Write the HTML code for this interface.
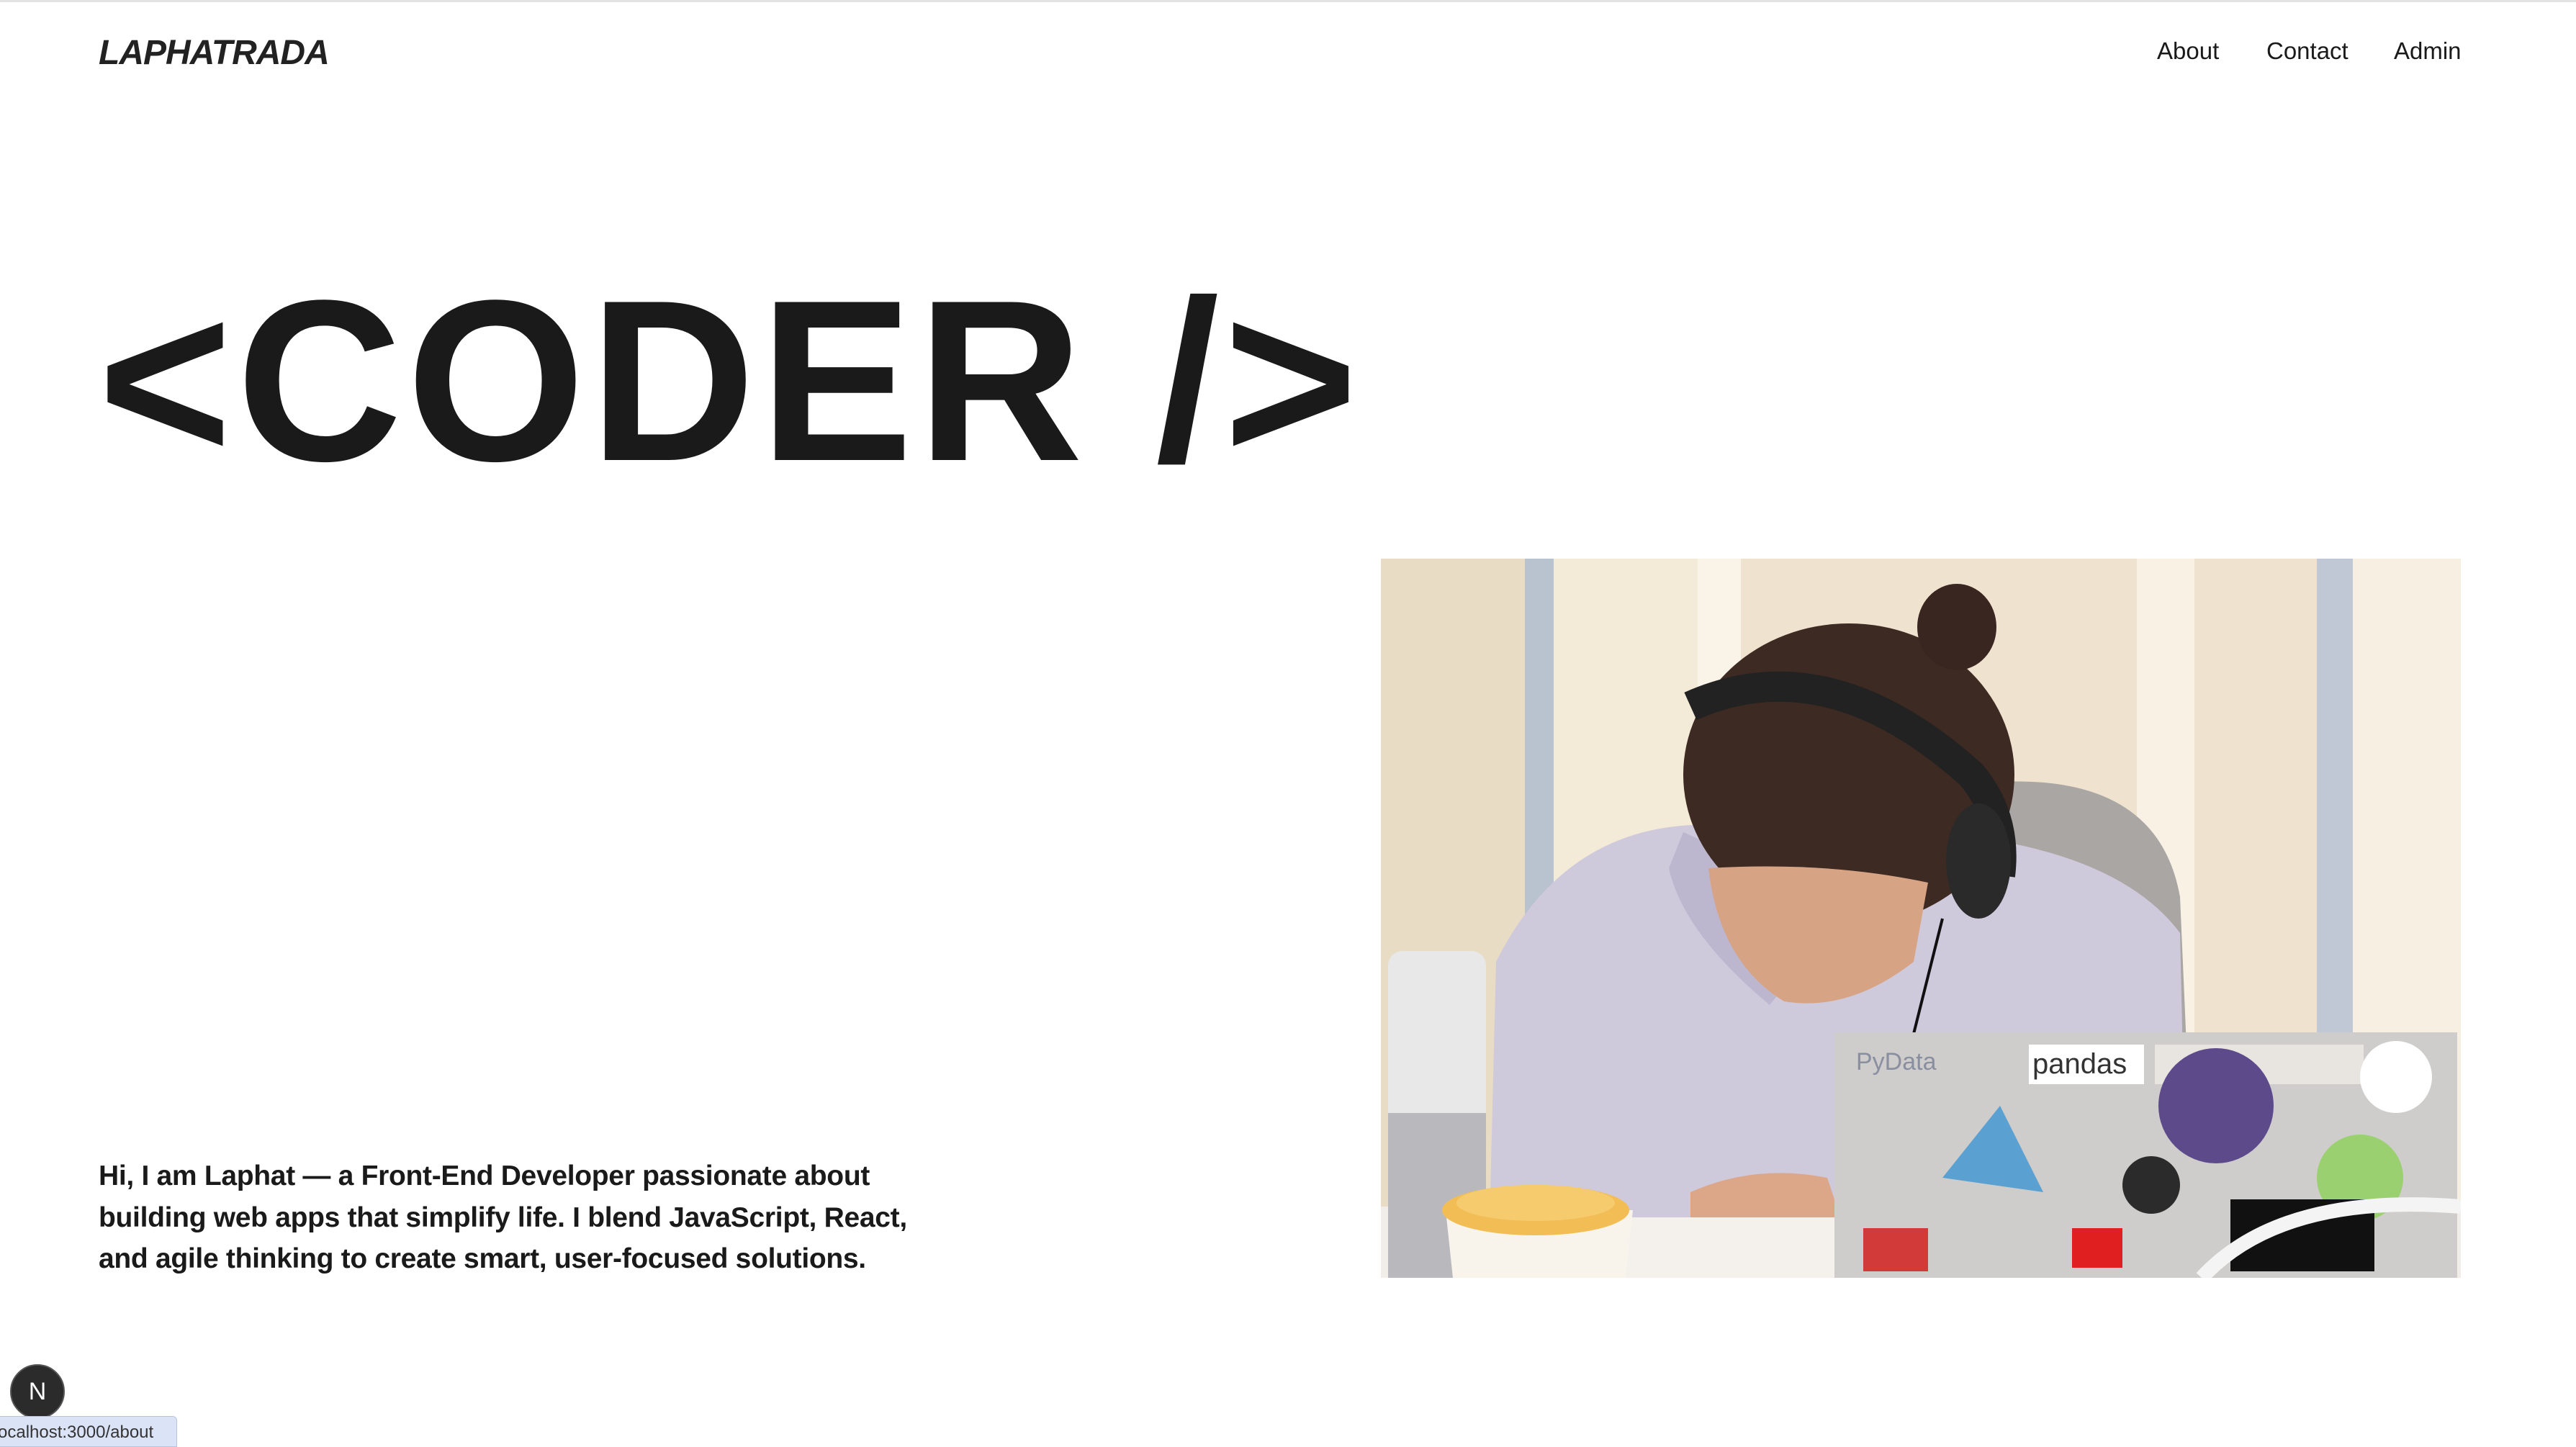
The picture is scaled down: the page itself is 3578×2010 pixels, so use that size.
<!DOCTYPE html>
<html><head><meta charset="utf-8"><style>
html,body{margin:0;padding:0;background:#fff;}
body{width:3578px;height:2010px;position:relative;overflow:hidden;font-family:"Liberation Sans",Arial,sans-serif;color:#1a1a1a;}
.topline{position:absolute;left:0;top:0;width:100%;height:3px;background:#e2e2e2;}
.logo{position:absolute;left:137px;top:46px;font-size:48px;font-weight:bold;font-style:italic;letter-spacing:-1px;color:#222;}
.nav{position:absolute;top:52px;font-size:33px;color:#1a1a1a;}
.coder{position:absolute;left:136px;top:369px;font-size:319px;font-weight:bold;letter-spacing:6px;line-height:1;color:#1a1a1a;white-space:nowrap;}
.para{position:absolute;left:137px;top:1605px;width:1130px;font-size:39px;font-weight:bold;line-height:57.5px;color:#1a1a1a;letter-spacing:-0.3px;}
.photo{position:absolute;left:1918px;top:776px;width:1500px;height:999px;}
.badge{position:absolute;left:14px;top:1895px;width:76px;height:76px;border-radius:50%;background:#2b2b2b;border:2px solid #555;box-sizing:border-box;color:#fff;font-size:34px;text-align:center;line-height:72px;}
.status{position:absolute;left:-4px;top:1967px;width:250px;height:43px;background:#dbe4f7;border:1px solid #b9c4dc;border-radius:0 6px 0 0;font-size:24px;line-height:43px;color:#333;box-sizing:border-box;white-space:nowrap;overflow:hidden;}
</style></head><body>
<div class="topline"></div>
<div class="logo">LAPHATRADA</div>
<div class="nav" style="left:2996px">About</div>
<div class="nav" style="left:3148px">Contact</div>
<div class="nav" style="left:3325px">Admin</div>
<div class="coder">&lt;CODER /&gt;</div>
<div class="para">Hi, I am Laphat — a Front-End Developer passionate about building web apps that simplify life. I blend JavaScript, React, and agile thinking to create smart, user-focused solutions.</div>
<svg class="photo" viewBox="0 0 1500 999" preserveAspectRatio="none">
<rect width="1500" height="999" fill="#efe3cf"/>
<rect x="0" width="200" height="999" fill="#e9dcc4"/>
<rect x="200" width="40" height="999" fill="#b9c3cf"/>
<rect x="240" width="200" height="999" fill="#f3ead8"/>
<rect x="440" width="60" height="999" fill="#faf4e8"/>
<rect x="1050" width="80" height="999" fill="#f8f1e4"/>
<rect x="1300" width="50" height="999" fill="#bfc8d4"/>
<rect x="1350" width="150" height="999" fill="#f6efe2"/>
<rect x="0" y="900" width="1500" height="99" fill="#f1eeea"/>
<path d="M860 310 Q1080 300 1110 470 L1120 700 L850 700 Z" fill="#a9a6a4"/>
<path d="M150 960 L160 560 Q250 380 430 370 L760 380 Q1020 400 1110 520 L1120 960 Z" fill="#cfc9dc"/>
<path d="M420 380 Q560 440 620 520 L540 620 Q420 520 400 430 Z" fill="#bdb6cf"/>
<ellipse cx="650" cy="300" rx="230" ry="210" fill="#3d2a22"/>
<ellipse cx="800" cy="95" rx="55" ry="60" fill="#3a2620"/>
<path d="M455 430 Q470 560 560 615 Q650 630 740 560 L760 450 Q620 420 455 430 Z" fill="#d6a384"/>
<path d="M430 205 Q620 120 820 300 Q870 360 860 440" stroke="#222" stroke-width="42" fill="none"/>
<ellipse cx="830" cy="420" rx="45" ry="80" fill="#2a2a2a"/>
<path d="M780 500 Q760 580 740 660" stroke="#111" stroke-width="4" fill="none"/>
<path d="M430 880 Q520 840 620 860 L640 920 L430 930 Z" fill="#dca688"/>
<rect x="330" y="915" width="320" height="84" fill="#f4f1ec"/>
<rect x="630" y="658" width="865" height="341" fill="#cfcdcc"/>
<rect x="900" y="675" width="160" height="55" fill="#fff"/><text x="905" y="715" font-size="40" font-family="Liberation Sans" fill="#333">pandas</text>
<text x="660" y="710" font-size="34" font-family="Liberation Sans" fill="#8a8fa0">PyData</text>
<rect x="1075" y="675" width="290" height="55" fill="#e8e4e0"/>
<circle cx="1160" cy="760" r="80" fill="#5c4a8a"/>
<circle cx="1410" cy="720" r="50" fill="#fff"/>
<circle cx="1360" cy="860" r="60" fill="#9ad070"/>
<path d="M780 860 L860 760 L920 880 Z" fill="#5aa0d0"/>
<circle cx="1070" cy="870" r="40" fill="#2b2b2b"/>
<rect x="1180" y="890" width="200" height="100" fill="#111"/>
<rect x="670" y="930" width="90" height="60" fill="#d23a3a"/>
<rect x="960" y="930" width="70" height="55" fill="#e02020"/>
<path d="M1140 999 Q1250 880 1500 900" stroke="#f4f4f4" stroke-width="20" fill="none"/>
<rect x="10" y="545" width="136" height="454" rx="20" fill="#e8e8e8"/>
<rect x="10" y="770" width="136" height="229" fill="#b9b9bd"/>
<path d="M90 905 L350 905 L340 999 L100 999 Z" fill="#f8f4ec"/>
<ellipse cx="215" cy="905" rx="130" ry="35" fill="#f2bd55"/>
<ellipse cx="215" cy="895" rx="110" ry="25" fill="#f6cb6e"/>
</svg>
<div class="badge">N</div>
<div class="status">ocalhost:3000/about</div>
</body></html>
